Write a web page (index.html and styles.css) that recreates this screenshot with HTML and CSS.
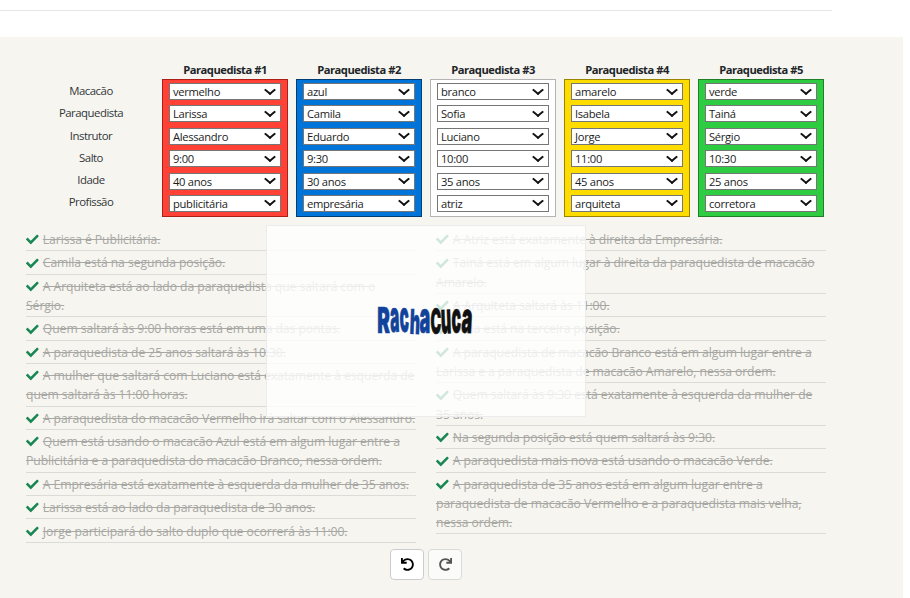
FILE: index.html
```html
<!DOCTYPE html>
<html lang="pt-BR">
<head>
<meta charset="utf-8">
<title>Racha Cuca</title>
<link rel="stylesheet" href="styles.css">
</head>
<body>
<svg class="defs" width="0" height="0">
<symbol id="check" viewBox="0 0 512 512"><path d="M173.898 439.404l-166.4-166.4c-9.997-9.997-9.997-26.206 0-36.204l36.203-36.204c9.997-9.998 26.207-9.998 36.204 0L192 312.69 432.095 72.596c9.997-9.997 26.207-9.997 36.204 0l36.203 36.204c9.997 9.997 9.997 26.206 0 36.204l-294.4 294.401c-9.998 9.997-26.207 9.997-36.204-.001z"/></symbol>
<symbol id="undo" viewBox="0 0 512 512"><path d="M212.333 224.333H12c-6.627 0-12-5.373-12-12V12C0 5.373 5.373 0 12 0h48c6.627 0 12 5.373 12 12v78.112C117.773 39.279 184.26 7.47 258.175 8.007c136.906.994 246.448 111.623 246.157 248.532C504.041 393.258 393.12 504 256.333 504c-64.089 0-122.496-24.313-166.51-64.215-5.099-4.622-5.334-12.554-.467-17.42l33.967-33.967c4.474-4.474 11.662-4.717 16.401-.525C170.76 415.336 211.58 432 256.333 432c97.268 0 176-78.716 176-176 0-97.267-78.716-176-176-176-58.496 0-110.28 28.476-142.274 72.333h98.274c6.627 0 12 5.373 12 12v48c0 6.627-5.373 12-12 12z"/></symbol>
</svg>
<hr class="rule">
<main class="game">
  <div class="board">
    <div class="labels"><span>Macacão</span><span>Paraquedista</span><span>Instrutor</span><span>Salto</span><span>Idade</span><span>Profissão</span></div>
    <section class="person"><h2>Paraquedista #1</h2><div class="box red"><div class="sel">vermelho</div><div class="sel">Larissa</div><div class="sel">Alessandro</div><div class="sel">9:00</div><div class="sel">40 anos</div><div class="sel">publicitária</div></div></section>
    <section class="person"><h2>Paraquedista #2</h2><div class="box blue"><div class="sel">azul</div><div class="sel">Camila</div><div class="sel">Eduardo</div><div class="sel">9:30</div><div class="sel">30 anos</div><div class="sel">empresária</div></div></section>
    <section class="person"><h2>Paraquedista #3</h2><div class="box white"><div class="sel">branco</div><div class="sel">Sofia</div><div class="sel">Luciano</div><div class="sel">10:00</div><div class="sel">35 anos</div><div class="sel">atriz</div></div></section>
    <section class="person"><h2>Paraquedista #4</h2><div class="box yellow"><div class="sel">amarelo</div><div class="sel">Isabela</div><div class="sel">Jorge</div><div class="sel">11:00</div><div class="sel">45 anos</div><div class="sel">arquiteta</div></div></section>
    <section class="person"><h2>Paraquedista #5</h2><div class="box green"><div class="sel">verde</div><div class="sel">Tainá</div><div class="sel">Sérgio</div><div class="sel">10:30</div><div class="sel">25 anos</div><div class="sel">corretora</div></div></section>
  </div>
  <div class="clues">
    <ul>
      <li><svg class="ok"><use href="#check"/></svg><s>Larissa é Publicitária.</s></li>
      <li><svg class="ok"><use href="#check"/></svg><s>Camila está na segunda posição.</s></li>
      <li><svg class="ok"><use href="#check"/></svg><s>A Arquiteta está ao lado da paraquedista que saltará com o<br>Sérgio.</s></li>
      <li><svg class="ok"><use href="#check"/></svg><s>Quem saltará às 9:00 horas está em uma das pontas.</s></li>
      <li><svg class="ok"><use href="#check"/></svg><s>A paraquedista de 25 anos saltará às 10:30.</s></li>
      <li><svg class="ok"><use href="#check"/></svg><s>A mulher que saltará com Luciano está exatamente à esquerda de<br>quem saltará às 11:00 horas.</s></li>
      <li><svg class="ok"><use href="#check"/></svg><s>A paraquedista do macacão Vermelho irá saltar com o Alessandro.</s></li>
      <li><svg class="ok"><use href="#check"/></svg><s>Quem está usando o macacão Azul está em algum lugar entre a<br>Publicitária e a paraquedista do macacão Branco, nessa ordem.</s></li>
      <li><svg class="ok"><use href="#check"/></svg><s>A Empresária está exatamente à esquerda da mulher de 35 anos.</s></li>
      <li><svg class="ok"><use href="#check"/></svg><s>Larissa está ao lado da paraquedista de 30 anos.</s></li>
      <li><svg class="ok"><use href="#check"/></svg><s>Jorge participará do salto duplo que ocorrerá às 11:00.</s></li>
    </ul>
    <ul>
      <li><svg class="ok"><use href="#check"/></svg><s>A Atriz está exatamente à direita da Empresária.</s></li>
      <li><svg class="ok"><use href="#check"/></svg><s>Tainá está em algum lugar à direita da paraquedista de macacão<br>Amarelo.</s></li>
      <li><svg class="ok"><use href="#check"/></svg><s>A Arquiteta saltará às 11:00.</s></li>
      <li><svg class="ok"><use href="#check"/></svg><s>Sofia está na terceira posição.</s></li>
      <li><svg class="ok"><use href="#check"/></svg><s>A paraquedista de macacão Branco está em algum lugar entre a<br>Larissa e a paraquedista de macacão Amarelo, nessa ordem.</s></li>
      <li><svg class="ok"><use href="#check"/></svg><s>Quem saltará às 9:30 está exatamente à esquerda da mulher de<br>35 anos.</s></li>
      <li><svg class="ok"><use href="#check"/></svg><s>Na segunda posição está quem saltará às 9:30.</s></li>
      <li><svg class="ok"><use href="#check"/></svg><s>A paraquedista mais nova está usando o macacão Verde.</s></li>
      <li><svg class="ok"><use href="#check"/></svg><s>A paraquedista de 35 anos está em algum lugar entre a<br>paraquedista de macacão Vermelho e a paraquedista mais velha,<br>nessa ordem.</s></li>
    </ul>
  </div>
  <div class="actions">
    <button aria-label="Desfazer"><svg><use href="#undo"/></svg></button>
    <button class="redo" disabled aria-label="Refazer"><svg><use href="#undo"/></svg></button>
  </div>
</main>
<div class="overlay">
  <svg class="logo" width="100" height="34" viewBox="0 0 100 34">
    <g fill="#12439b" stroke="#12439b">
      <text transform="translate(1.2 27.8) scale(.54 1)" font-size="35">R</text>
      <text transform="translate(14.4 27) rotate(-2) scale(.36 1)" font-size="43">a</text>
      <text transform="translate(24 27) rotate(-2) scale(.36 1)" font-size="43">c</text>
      <text transform="translate(33.4 28.8) rotate(2) scale(.46 1)" font-size="34">h</text>
      <text transform="translate(43.4 28) scale(.42 1)" font-size="43">a</text>
    </g>
    <g fill="#111" stroke="#111">
      <text transform="translate(54.4 29.2) scale(.41 1)" font-size="35">C</text>
      <text transform="translate(65.2 28.6) rotate(-2) scale(.37 1)" font-size="43">u</text>
      <text transform="translate(75.4 28.2) scale(.37 1)" font-size="43">c</text>
      <text transform="translate(85 27.6) rotate(3) scale(.43 1)" font-size="42">a</text>
    </g>
  </svg>
</div>
</body>
</html>
```

FILE: styles.css
```css
* { box-sizing: border-box; }
body { margin: 0; height: 598px; background: #fff; color: #212529; font-family: "Open Sans", sans-serif; overflow: hidden; }
.defs { position: absolute; }
.rule { width: 832px; height: 1px; margin: 10px 0 26px; border: 0; background: #e6e6e6; }
.game { width: 903px; height: 561px; padding: 24px 0 0 26px; background: #f6f5f0; }
.board { display: flex; gap: 8px; height: 166.8px; }
.labels { display: flex; flex-direction: column; width: 128px; padding: 19px 0 0 2px; font-size: 11.4px; line-height: 22.3px; text-align: center; color: #33373a; letter-spacing: -.5px; }
.person { width: 126px; }
.person h2 { margin: 0; height: 18px; font-size: 11.2px; line-height: 18px; font-weight: 700; text-align: center; letter-spacing: -.48px; white-space: nowrap; }
.box { display: grid; grid-auto-rows: 17px; gap: 5.4px; height: 138px; padding: 3px 6px; border: 1px solid; }
.red { background: #ff4136; border-color: #ad2018; }
.blue { background: #0074d9; border-color: #003e75; }
.white { background: #fff; border-color: #b4b4b4; }
.yellow { background: #ffdc00; border-color: #998400; }
.green { background: #2ecc40; border-color: #1f7d2b; }
.sel { padding-left: 3px; border: 1px solid #767676; color: #1c1c1c; font-size: 11.2px; line-height: 16px; letter-spacing: -.3px; background: #fff; position: relative; }
.sel::after { content: ""; position: absolute; right: 6px; top: 2.5px; width: 6px; height: 6px; border: solid #111; border-width: 0 2px 2px 0; transform: translateY(-1px) scale(1.05, .9) rotate(45deg); }
.clues { display: flex; gap: 20px; height: 321.2px; }
.clues ul { width: 390px; margin: 0; padding: 0; list-style: none; }
.clues li { padding: 2.3px 0 .9px; border-bottom: 1px solid #dbdbd8; color: #a7a7a3; font-size: 12.2px; line-height: 19.2px; letter-spacing: -.07px; white-space: nowrap; }
.ok { width: 12.8px; height: 12.8px; margin-right: 4px; vertical-align: -2px; fill: #198754; }
.actions { display: flex; gap: 4px; margin-left: 364px; }
.actions button { width: 34px; height: 31px; padding: 0; border: 1px solid #ccc; border-radius: 4px; background: #fff; display: grid; place-items: center; }
.actions svg { width: 13px; height: 13px; fill: #000; }
.actions .redo { opacity: .65; }
.redo svg { transform: scaleX(-1); }
.overlay { position: absolute; left: 266px; top: 225px; width: 320px; height: 192px; border: 1px solid #ececec; background: rgba(255,255,255,.8); }
.logo { position: absolute; left: 109px; top: 79px; font-family: Inter, sans-serif; font-weight: 900; overflow: visible; }
.logo text { stroke-width: .7px; }
```
